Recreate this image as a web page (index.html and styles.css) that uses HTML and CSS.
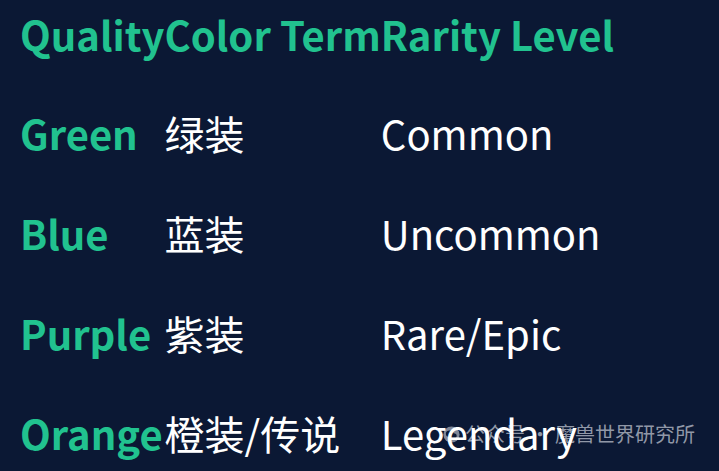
FILE: index.html
```html
<!DOCTYPE html>
<html lang="zh">
<head>
<meta charset="utf-8">
<link rel="stylesheet" href="styles.css">
</head>
<body>
<main class="page">
  <div class="watermark">
    <svg class="wm-icon" viewBox="0 0 20 20" width="17" height="17" aria-hidden="true">
      <circle cx="10" cy="10" r="9.5" fill="currentColor"/>
      <ellipse cx="8" cy="9" rx="4.6" ry="3.8" fill="#0b1834"/>
      <ellipse cx="12.3" cy="11.6" rx="3.8" ry="3.1" fill="#0b1834"/>
    </svg>
    <span>公众号</span><span class="dot">·</span><span>魔兽世界研究所</span>
  </div>
  <table class="quality">
    <thead>
      <tr><th>Quality</th><th>Color Term</th><th>Rarity Level</th></tr>
    </thead>
    <tbody>
      <tr><td class="q">Green</td><td>绿装</td><td>Common</td></tr>
      <tr><td class="q">Blue</td><td>蓝装</td><td>Uncommon</td></tr>
      <tr><td class="q">Purple</td><td>紫装</td><td>Rare/Epic</td></tr>
      <tr><td class="q">Orange</td><td>橙装/传说</td><td>Legendary</td></tr>
    </tbody>
  </table>
</main>
</body>
</html>
```
FILE: styles.css
```css
html, body {
  margin: 0;
  padding: 0;
  background: #0b1834;
}
.page {
  position: relative;
  width: 719px;
  height: 471px;
  overflow: hidden;
  background: #0b1834;
  font-family: "Noto Sans CJK SC", "Noto Sans", sans-serif;
}
.quality {
  position: relative;
  z-index: 1;
  border-collapse: collapse;
  margin-left: 20px;
}
.quality th,
.quality td {
  padding: 0;
  text-align: left;
  vertical-align: middle;
  font-size: 40px;
  line-height: 1;
  white-space: nowrap;
}
.quality th {
  height: 68px;
  padding-bottom: 15px;
  color: #21c28f;
  font-weight: 700;
}
.quality td {
  height: 100px;
  color: #ffffff;
  font-weight: 400;
}
.quality td.q {
  color: #21c28f;
  font-weight: 700;
}
.watermark {
  position: absolute;
  z-index: 0;
  right: 24px;
  top: 422px;
  display: flex;
  align-items: center;
  gap: 3px;
  color: rgba(205, 210, 220, 0.7);
  font-size: 20px;
  line-height: 24px;
}
.watermark .dot {
  margin: 0 2px;
}
.wm-icon {
  display: block;
  margin-right: 2px;
  color: rgba(205, 210, 220, 0.6);
}
```
